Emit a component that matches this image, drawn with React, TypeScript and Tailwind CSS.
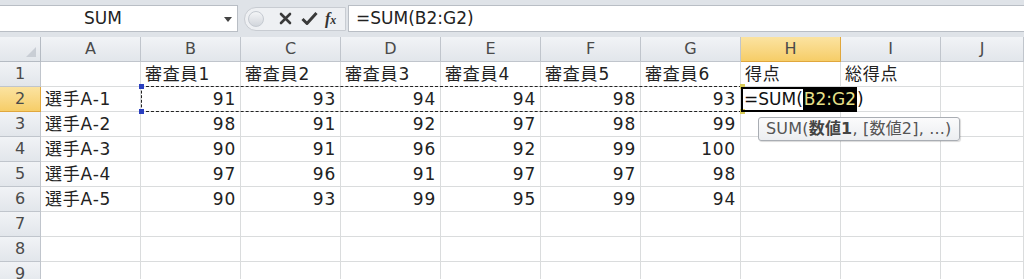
import React from "react";

const cols = ["A", "B", "C", "D", "E", "F", "G", "H", "I", "J"];

const rows: (string | number)[][] = [
  ["", "審査員1", "審査員2", "審査員3", "審査員4", "審査員5", "審査員6", "得点", "総得点", ""],
  ["選手A-1", 91, 93, 94, 94, 98, 93, "", "", ""],
  ["選手A-2", 98, 91, 92, 97, 98, 99, "", "", ""],
  ["選手A-3", 90, 91, 96, 92, 99, 100, "", "", ""],
  ["選手A-4", 97, 96, 91, 97, 97, 98, "", "", ""],
  ["選手A-5", 90, 93, 99, 95, 99, 94, "", "", ""],
  ["", "", "", "", "", "", "", "", "", ""],
  ["", "", "", "", "", "", "", "", "", ""],
  ["", "", "", "", "", "", "", "", "", ""],
];

function FormulaBar() {
  return (
    <div className="h-[37px] bg-[#dfe3e8] pt-[5px] pb-[5px] flex">
      <div className="w-[238px] bg-white border-y border-r border-[#b9bec5] flex items-center relative">
        <span className="absolute left-[84px] text-[17px] text-[#222]">SUM</span>
        <span className="absolute right-[5px] top-[11px] w-0 h-0 border-x-[4px] border-x-transparent border-t-[5px] border-t-[#444]" />
      </div>
      <div className="w-[110px] flex items-center pl-[6px]">
        <div className="h-[24px] w-[102px] rounded-l-full bg-[#eef0f3] border border-[#c8ccd2] flex items-center">
          <span className="w-[16px] h-[16px] ml-[3px] rounded-full bg-gradient-to-b from-[#f4f5f7] to-[#d2d6dc] border border-[#c5cad1]" />
          <svg className="ml-[15px]" width="13" height="13" viewBox="0 0 13 13">
            <path d="M2 2 L11 11 M11 2 L2 11" stroke="#3a3a3a" strokeWidth="2.6" strokeLinecap="round" />
          </svg>
          <svg className="ml-[9px]" width="17" height="15" viewBox="0 0 17 15">
            <path d="M1.5 8 L6 12.5 L15.5 2" stroke="#3a3a3a" strokeWidth="3" fill="none" strokeLinejoin="round" />
          </svg>
          <span className="ml-[7px] text-[16px] italic font-bold text-[#333]" style={{ fontFamily: '"Liberation Serif", serif' }}>
            f<span className="text-[12px]">x</span>
          </span>
        </div>
      </div>
      <div className="flex-1 bg-white border-y border-l border-[#b9bec5] flex items-center pl-[7px]">
        <span className="text-[17px] text-[#222]">=SUM(B2:G2)</span>
      </div>
    </div>
  );
}

function Header() {
  return (
    <>
      <div className="h-[25px] bg-gradient-to-b from-[#f1f3f6] to-[#e2e6eb] border-r border-b border-[#b5bbc3] relative">
        <span className="absolute right-[4px] bottom-[4px] w-0 h-0 border-l-[10px] border-l-transparent border-b-[10px] border-b-[#c9ced5]" />
      </div>
      {cols.map((c) => (
        <div
          key={c}
          className={
            c === "H"
              ? "h-[25px] flex items-center justify-center text-[16px] text-[#4a4a4a] bg-gradient-to-b from-[#fbe3a0] to-[#f6cd67] border-r border-b border-[#e0a73d]"
              : "h-[25px] flex items-center justify-center text-[16px] text-[#4a4a4a] bg-gradient-to-b from-[#f1f3f6] to-[#e2e6eb] border-r border-b border-[#c0c5cc]"
          }
        >
          {c}
        </div>
      ))}
    </>
  );
}

export default function App() {
  return (
    <div className="w-[1024px] h-[279px] overflow-hidden bg-white" style={{ fontFamily: '"DejaVu Sans", "Noto Sans CJK JP", sans-serif' }}>
      <FormulaBar />
      <div className="relative grid grid-cols-[41px_repeat(9,100px)_1fr] auto-rows-[25px]">
        <Header />
        {rows.map((r, i) => (
          <React.Fragment key={i}>
            <div
              className={
                i === 1
                  ? "flex items-center justify-center text-[16px] text-[#4a4a4a] bg-gradient-to-b from-[#fbe3a0] to-[#f6cd67] border-r border-b border-[#e0a73d]"
                  : "flex items-center justify-center text-[16px] text-[#4a4a4a] bg-gradient-to-b from-[#f1f3f6] to-[#e2e6eb] border-r border-b border-[#c0c5cc]"
              }
            >
              {i + 1}
            </div>
            {r.map((v, j) =>
              i === 1 && j === 7 ? (
                <div key={j} className="border-2 border-black flex items-center pl-[1px] text-[17px] text-[#111] whitespace-nowrap relative z-10 overflow-visible">
                  =SUM(
                  <span className="bg-black text-[#e7e08a] px-[1px]">B2:G2</span>
                  )
                </div>
              ) : (
                <div
                  key={j}
                  className={
                    "border-r border-b border-[#dadcdd] flex items-center text-[17px] text-[#222] whitespace-nowrap px-[4px] pt-[2px] tracking-[0.8px] " +
                    (typeof v === "number" ? "justify-end" : "justify-start")
                  }
                >
                  {v}
                </div>
              )
            )}
          </React.Fragment>
        ))}

        {/* copy/reference marquee around B2:G2 */}
        <div className="absolute left-[141px] top-[49px] w-[601px] h-[26px] border border-dashed border-[#222] pointer-events-none" />
        <span className="absolute left-[139px] top-[47px] w-[5px] h-[5px] bg-[#2a3fbf]" />
        <span className="absolute left-[139px] top-[72px] w-[5px] h-[5px] bg-[#2a3fbf]" />
        <span className="absolute left-[740px] top-[47px] w-[5px] h-[5px] bg-[#d8cc5a]" />
        <span className="absolute left-[740px] top-[72px] w-[5px] h-[5px] bg-[#d8cc5a]" />

        {/* function tooltip */}
        <div className="absolute left-[758px] top-[80px] h-[24px] px-[7px] flex items-center rounded-[3px] border border-[#a9adb3] bg-gradient-to-b from-[#fbfbfc] to-[#eceef1] text-[16px] tracking-[0.2px] text-[#555] whitespace-nowrap shadow-[1px_1px_1px_rgba(0,0,0,0.15)]">
          SUM(<span className="font-bold text-[#444]">数値1</span>, [数値2], ...)
        </div>
      </div>
    </div>
  );
}
